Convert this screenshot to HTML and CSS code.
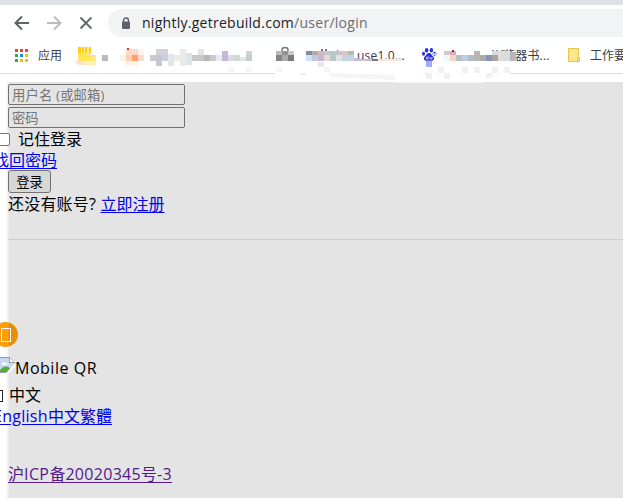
FILE: index.html
```html
<!DOCTYPE html>
<html lang="zh-CN">
<head>
<meta charset="utf-8">
<title>登录</title>
<link rel="stylesheet" href="styles.css">
</head>
<body>
<header class="browser">
  <div class="toolbar">
    <svg class="nav" width="92" height="28" viewBox="0 0 92 28" fill="none" stroke-width="2">
      <path d="M21 14H8M14 7.5L7.5 14L14 20.5" transform="translate(8 0)" stroke="#5f6368"/>
      <path d="M47 14H60M54 7.5L60.5 14L54 20.5" stroke="#babcbe"/>
      <path d="M80.500 8.500L91.500 19.500M91.500 8.500L80.500 19.500" stroke="#5f6368" stroke-width="1.800"/>
    </svg>
    <div class="address">
      <svg width="10" height="13" viewBox="0 0 10 13"><path d="M2.500 5V3.500a2.500 2.500 0 0 1 5 0V5" fill="none" stroke="#5f6368" stroke-width="1.400"/><rect x="1" y="4.500" width="8" height="7.500" rx="1" fill="#5f6368"/></svg>
      <span class="url">nightly.getrebuild.com<span class="path">/user/login</span></span>
    </div>
  </div>
  <nav class="bookmarks">
    <svg class="apps" width="13" height="13" viewBox="0 0 13 13">
      <path d="M0 0h3v3H0zM5 0h3v3H5zM10 0h3v3h-3z" fill="#ea4335"/>
      <path d="M0 5h3v3H0zM0 10h3v3H0z" fill="#34a853"/><path d="M5 5h3v3H5z" fill="#1e88e5"/>
      <path d="M10 5h3v3h-3zM5 10h3v3H5zM10 10h3v3h-3z" fill="#fbbc05"/>
    </svg>
    <span class="label apps-label">应用</span>
    <span class="label house">use1.0...</span>
    <svg class="paw" width="14" height="14" viewBox="0 0 14 14" fill="#2932e1">
      <ellipse cx="4.600" cy="2.300" rx="1.700" ry="2.200"/><ellipse cx="9.400" cy="2.300" rx="1.700" ry="2.200"/>
      <ellipse cx="1.500" cy="5.800" rx="1.500" ry="2"/><ellipse cx="12.500" cy="5.800" rx="1.500" ry="2"/>
      <path d="M7 5c2.200 0 2.500 2.200 4.200 3.600C13 10.300 12 13 9.700 12.800H4.300C2 13 1 10.300 2.800 8.600 4.500 7.200 4.800 5 7 5z"/>
      <path d="M4.500 9v2h1.500V8M8 9v2h2V9" fill="none" stroke="#fff" stroke-width=".7"/>
    </svg>
    <span class="label books">览器书...</span>
    <svg class="folder" width="12" height="14" viewBox="0 0 12 14"><path d="M.5.5h10v9h1v4H.5z" fill="#ffe58b" stroke="#e9c54b"/><path d="M9.500 13V9.500h1" fill="none" stroke="#e9c54b"/></svg>
    <span class="label work">工作要</span>
  </nav>
  <svg class="mosaic" width="623" height="46" viewBox="0 37 623 46" shape-rendering="crispEdges">
    <path d="M78 47h13v6H78z" fill="#fff0a0"/><path d="M78 47h3v7h-3zM82 47h2v7h-2zM85 47h2v7h-2zM89 47h2v7h-2z" fill="#ffce12"/>
    <path d="M78 53h12v8H78z" fill="#ffe855"/><path d="M90 55h6v6h-6zM84 61h6v4h-6z" fill="#ffe77d"/><path d="M75 61h9v4h-6z" fill="#ffdede"/><path d="M84 61h12v4H84z" fill="#fff0b5"/>
    <path d="M102 55h6v6h-6z" fill="#b8b8bd"/>
    <path d="M120 55h6v6h-6zM126 61h12v5h-12zM138 49h6v6h-6z" fill="#fff2e9"/><path d="M126 49h6v6h-6zM132 49h6v6h-6z" fill="#ffd8c9"/><path d="M126 55h6v6h-6z" fill="#ffd0b4"/><path d="M132 55h6v6h-6z" fill="#ffa36b"/><path d="M138 55h6v6h-6z" fill="#ffdbc7"/><path d="M127 48h2v2h-2z" fill="#d83b29"/>
    <path d="M150 55h6v6h-6z" fill="#cbc9d2"/><path d="M156 49h12v6h-12z" fill="#d2d0da"/><path d="M156 55h6v11h-6z" fill="#c9c5d2"/><path d="M162 55h6v6h-6z" fill="#cecddd"/><path d="M168 54h6v12h-6z" fill="#e0e7f1"/><path d="M174 55h6v6h-6z" fill="#f3e9e4"/><path d="M180 49h6v17h-6z" fill="#e9eaea"/><path d="M186 53h6v12h-6z" fill="#dce5e9"/><path d="M192 55h12v6h-12z" fill="#c8c7ca"/><path d="M198 49h6v6h-6z" fill="#e9e1dd"/><path d="M204 55h6v6h-6z" fill="#b9b6bb"/><path d="M210 55h6v6h-6z" fill="#c9c8ce"/><path d="M216 55h6v6h-6z" fill="#eee9f0"/><path d="M222 51h6v10h-6z" fill="#c6b7d4"/><path d="M228 55h6v6h-6z" fill="#d9dce8"/><path d="M234 55h6v6h-6z" fill="#d4d9cf"/><path d="M240 57h6v4h-6z" fill="#e1e6df"/><path d="M246 51h6v4h-6z" fill="#cdd1d9"/><path d="M246 55h6v6h-6z" fill="#c4ced0"/>
    <path d="M282 51v-1a3 2.500 0 0 1 6 0v1" fill="none" stroke="#777" stroke-width="1.500" shape-rendering="auto"/><path d="M276 51h6v4h-6z" fill="#bababa"/><path d="M282 51h6v4h-6z" fill="#929292"/><path d="M288 51h6v4h-6z" fill="#c8c8c8"/><path d="M276 55h6v6h-6z" fill="#858585"/><path d="M282 55h6v6h-6z" fill="#aaa"/><path d="M288 55h6v6h-6z" fill="#7b7b7b"/>
    <path d="M306 51h6v4h-6z" fill="#838ca5"/><path d="M312 51h6v4h-6z" fill="#b0acad"/><path d="M318 51h6v4h-6z" fill="#d4b5bb"/><path d="M324 51h6v4h-6z" fill="#c9c6ca"/><path d="M330 51h6v10h-6z" fill="#b6c9c5"/><path d="M336 51h6v4h-6z" fill="#c4c5ce"/><path d="M342 51h6v4h-6z" fill="#e3c2c6"/><path d="M348 51h6v4h-6z" fill="#b9b8be"/><path d="M306 55h6v6h-6z" fill="#cfe2f7"/><path d="M312 55h6v6h-6z" fill="#c1c9d9"/><path d="M318 55h6v6h-6z" fill="#c4b6d6"/><path d="M324 55h6v6h-6z" fill="#e8d9d3"/><path d="M336 55h6v6h-6z" fill="#e0e3e6"/><path d="M342 55h12v6h-12z" fill="#c6d3e5"/><path d="M321 49h2v2h-2zM325 49h2v2h-2zM337 50h1v1h-1z" fill="#60789f"/><path d="M354 58h6v3h-6z" fill="#bfbcd5"/><path d="M360 59h12v2h-12z" fill="#c8bfd7"/><path d="M372 59h6v2h-6z" fill="#78738c"/><path d="M378 59h24v2h-24z" fill="#fbe6d5"/>
    <path d="M275 61h130v6h20v8h87v6H275z" fill="#fff"/><path d="M228 67h6v5h-6zM246 67h6v5h-6zM276 67h6v5h-6zM324 67h6v5h-6z" fill="#f5f5f5"/><path d="M318 62h6v5h-6z" fill="#e9e5f0"/><path d="M300 73h6v2h-6z" fill="#eee"/><path d="M330 73l65 2v5l-65-3z" fill="#f5f5f5"/>
    <path d="M426 67h84v8h-84z" fill="#fff"/>
    <path d="M444 51h6v4h-6z" fill="#d5c6ca"/><path d="M450 51h6v4h-6z" fill="#d9aeb8"/><path d="M452 50h2v2h-2z" fill="#a81635"/><path d="M444 55h6v6h-6z" fill="#e8faff"/><path d="M450 55h6v6h-6z" fill="#f0d7bd"/><path d="M456 55h6v6h-6z" fill="#b8bfbf"/><path d="M462 55h6v6h-6z" fill="#bdcfe8"/><path d="M468 55h6v6h-6z" fill="#b4bbc3"/><path d="M474 51h6v10h-6z" fill="#b7b5b2"/><path d="M480 55h6v6h-6z" fill="#a9adb0"/><path d="M486 55h6v6h-6z" fill="#8795b5"/><path d="M492 51h6v4h-6z" fill="#d3dce1"/><path d="M492 55h6v6h-6z" fill="#a8a4a2"/><path d="M498 51h6v10h-6z" fill="#e4ddd5"/><path d="M504 51h6v10h-6z" fill="#d4dee2"/><path d="M510 52h6v9h-6z" fill="#bbb5c0"/><path d="M492 50h2v1h-2zM496 50h2v1h-2zM501 50h3v1h-3zM506 50h2v1h-2z" fill="#8895a0"/>
    <path d="M426 61h6v6h-6z" fill="#a8aaf2"/><path d="M432 53h5v2h-5z" fill="#b8b9f1"/><path d="M438 67h6v6h-6zM444 73h6v6h-6zM462 67h6v6h-6zM474 67h6v6h-6zM486 73h6v5h-6zM492 67h6v6h-6zM504 67h6v6h-6zM426 73h6v6h-6z" fill="#f1f1f1"/>
    <path d="M394 80h82l8-5v8h-90z" fill="#fff" opacity=".6"/>
  </svg>
</header>
<main class="page">
  <form class="login">
    <input class="field" type="text" placeholder="用户名 (或邮箱)">
    <input class="field" type="text" placeholder="密码">
    <label class="remember"><span class="box"></span>记住登录</label>
    <a class="forgot" href="#">找回密码</a>
    <button class="submit" type="button">登录</button>
    <p class="signup">还没有账号? <a href="#">立即注册</a></p>
  </form>
  <hr class="rule">
  <div class="mobile"><span class="tofu"></span></div>
  <div class="qr">
    <svg width="16" height="16" viewBox="0 0 16 16"><path d="M.5.5h10l5 5v10H.5z" fill="#c4d7f5" stroke="#999"/><path d="M10.500.5v5h5" fill="#fff" stroke="#999"/><path d="M3 7c0-2 2-2 2.500-1C7 4 9 6 8 8H3z" fill="#fff"/><path d="M1 15v-2c4-5 8-4 11-1l-3 3z" fill="#4caf36"/><path d="M16 8L8 16h8z" fill="#e4e4e4"/><path d="M16 6L7 16h3l6-6z" fill="#fff"/></svg>
    <span>Mobile QR</span>
  </div>
  <div class="language"><span class="tofu"></span>中文</div>
  <a class="languages" href="#"><span class="en">English</span>中文繁體</a>
  <a class="icp" href="#">沪<span class="latin">ICP</span>备<span class="num">20020345</span>号<span class="latin">-3</span></a>
</main>
</body>
</html>
```
FILE: styles.css
```css
* { box-sizing: border-box; }
body {
  margin: 0;
  width: 623px;
  height: 498px;
  overflow: hidden;
  background: #fff;
  color: #000;
  font: 16px/21px "Open Sans", "Noto Sans CJK SC", sans-serif;
}
.browser { position: relative; height: 82px; border-top: 5px solid #dee1e6; background: #fff; }
.toolbar { display: flex; height: 32px; padding-top: 4px; }
.nav { flex: none; margin-right: 16px; }
.address {
  display: flex;
  flex: 1;
  align-items: center;
  gap: 11px;
  height: 28px;
  padding-left: 13px;
  border-radius: 14px 0 0 14px;
  background: #f1f3f4;
}
.url { margin-top: -1px; font-size: 14px; letter-spacing: .27px; color: #202124; white-space: nowrap; }
.path { color: #6b6e72; }
.bookmarks { display: flex; align-items: center; height: 37px; padding-left: 15px; border-bottom: 1px solid #dadce0; white-space: nowrap; }
.bookmarks svg, .label { flex: none; }
.label { font-size: 12px; color: #3c4043; }
.apps-label { width: 319px; margin-left: 10px; }
.house { width: 65px; letter-spacing: .2px; }
.label.house { color: #37344b; }
.paw { margin-right: 67px; }
.books { width: 65px; letter-spacing: .2px; }
.folder { margin-right: 10px; }
.mosaic { position: absolute; left: 0; top: 32px; }
.page {
  height: 416px;
  padding: 2px 0 0 8px;
  background: linear-gradient(90deg, #fff 0, #fff 6px, #eee 8px, #e4e4e4 10px);
  box-shadow: 0 -1px 1px #f1f1f1;
}
.login { display: flex; flex-direction: column; align-items: flex-start; }
.field {
  width: 177px;
  height: 21px;
  margin: 0 0 2px;
  padding: 0 3px;
  border: 1px solid #717171;
  border-radius: 2px;
  background: #e4e4e4;
  font: 13.333px "Open Sans", "Noto Sans CJK SC", sans-serif;
}
.field:first-child { letter-spacing: .15px; }
.field::placeholder { color: #757575; }
.remember { display: flex; align-items: center; gap: 8px; height: 19px; margin-left: -11px; }
.box { width: 13px; height: 13px; margin-top: -1px; border: 1px solid #767676; border-radius: 2px; background: #fff; }
a { color: #0000ee; text-underline-offset: 2px; }
.forgot { height: 20px; margin-left: -15px; line-height: 22px; }
.submit {
  width: 43px;
  height: 23px;
  margin-top: 1px;
  padding: 0;
  border: 1px solid #717171;
  border-radius: 3px;
  background: #d7d7d7;
  font: 13.333px "Noto Sans CJK SC", sans-serif;
  line-height: 20px;
}
.signup { margin: 1px 0 0; white-space: pre; letter-spacing: .2px; }
.signup a { letter-spacing: 0; }
.rule { height: 1px; margin: 24px 0 82px; border: 0; background: #cdcdcd; }
.mobile { display: flex; align-items: center; justify-content: center; width: 25px; height: 25px; margin-left: -15px; border-radius: 50%; background: linear-gradient(90deg, #ff9d0a 60%, #e78e08 65%); }
.mobile .tofu { width: 10px; height: 14px; border: 1px solid #fff; }
.qr { display: flex; align-items: flex-start; height: 28px; margin: 10px 0 0 -9px; }
.qr span { line-height: 22px; letter-spacing: .52px; }
.language { display: flex; align-items: center; gap: 6px; height: 21px; margin-left: -12px; }
.language .tofu { width: 7px; height: 12px; border: 1px solid #222; }
.languages { display: block; width: max-content; height: 21px; margin-left: -15px; }
.en { letter-spacing: .28px; }
.icp { display: block; width: max-content; margin-top: 37px; color: #551a8b; }
.latin { letter-spacing: .4px; }
.num { letter-spacing: .3px; }
```
